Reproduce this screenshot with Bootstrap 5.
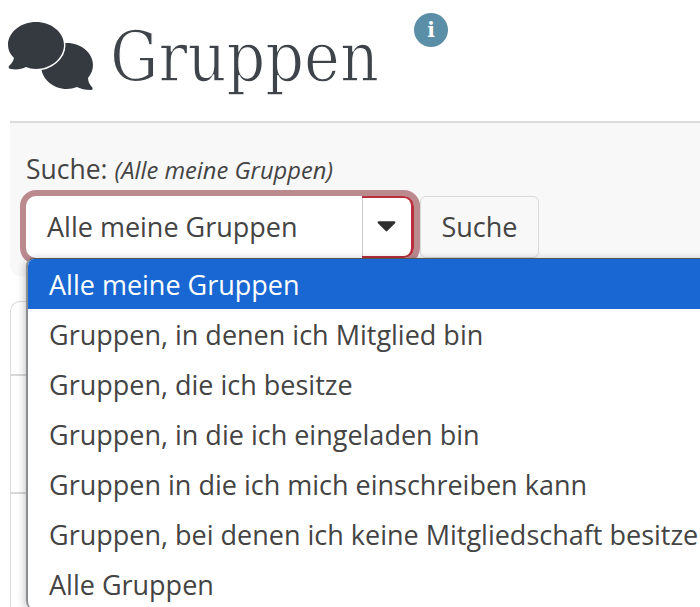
<!DOCTYPE html>
<html lang="de">
<head>
<meta charset="utf-8">
<title>Gruppen</title>
<link rel="stylesheet" href="https://cdn.jsdelivr.net/npm/bootstrap@5.3.0/dist/css/bootstrap.min.css">
<style>
html,body{height:607px;overflow:hidden;background:#fff;}
body{font-family:"Open Sans","Noto Sans",sans-serif;color:#3f4448;}
.stage{position:relative;width:700px;height:607px;overflow:hidden;padding-left:10px;}
.head-row{height:121px;margin-left:-2px;padding-top:17px;}
.chat-ico{width:88px;height:76px;flex:none;}
.page-title{font-family:"DejaVu Serif","Liberation Serif",serif;font-weight:400;font-size:70px;line-height:82px;color:#3e444a;margin:-1px 0 0 14px;transform:scaleX(.866);transform-origin:left;-webkit-text-stroke:1.4px #fff;}
.info-dot{position:absolute;left:414px;top:13px;width:34px;height:34px;border-radius:50%;background:#5b8fa8;color:#fff;font-family:"DejaVu Serif",serif;font-weight:700;font-size:20px;line-height:34px;text-align:center;}
.search-panel{height:155px;background:#f8f8f8;border-top:2px solid #dcdcdc;border-bottom-left-radius:10px;padding:31px 0 0 16px;}
.search-label{font-size:26.5px;line-height:30px;color:#444;}
.search-label em{font-size:23.7px;}
.controls{margin-top:11px;gap:6px;}
.combo{width:388px;height:62px;background:#fff;border-radius:10px;box-shadow:0 0 0 6px #bb8a8f;}
.combo-text{font-size:27px;padding:1px 0 0 21px;color:#444;}
.combo-arrow{width:52px;border:solid #b92f3d;border-width:2px 3px 2px 0;border-radius:0 10px 10px 0;box-shadow:inset 1px 0 0 #ccc;}
.caret-ico{width:19px;height:12px;margin-bottom:3px;}
.search-btn{width:119px;height:62px;font-size:27px;color:#444;background:#f8f8f8;border:1px solid #d9d9d9;border-radius:6px;padding:0;}
.table-box{height:400px;margin-top:25px;border:1px solid #dcdcdc;border-right:0;border-radius:10px 0 0 0;background:#fff;}
.table-line{height:74px;border-bottom:2px solid #d8d8d8;}
.table-line-b{height:118px;border-bottom:2px solid #d8d8d8;}
.option-menu{position:absolute;left:26px;top:258px;width:690px;margin:0;padding:0;display:block;background:#fff;border:0;border-left:2px solid #8b8f92;border-top:1px solid #555;border-radius:8px 0 0 8px;box-shadow:0 2px 10px rgba(0,0,0,.3);overflow:hidden;}
.option-menu .dropdown-item{height:50px;padding:0 0 0 21px;font-size:27px;line-height:52px;color:#444;white-space:nowrap;}
.option-menu .dropdown-item.active{background:#1967d2;color:#fff;}
</style>
</head>
<body>
<div class="stage">
  <div class="head-row d-flex align-items-start">
    <svg class="chat-ico" viewBox="0 0 88 76" aria-hidden="true">
      <path fill="#343a40" d="M59 26C73 26 85 36 85 48c0 5-2 9-5 13 0 4 2 7 4 9 1 1 1 3-1 3-6 0-10-1-14-3-3 1-7 2-10 2-14 0-26-10-26-24S45 26 59 26Z"/>
      <path fill="#343a40" stroke="#fff" stroke-width="3" paint-order="stroke" d="M28 5C43 5 56 15 56 28S43 52 28 52c-4 0-7-1-10-2-4 2-9 3-15 2-2 0-3-2-2-3 2-2 4-4 5-8C2 37 0 33 0 28 0 15 13 5 28 5Z"/>
    </svg>
    <h1 class="page-title">Gruppen</h1>
  </div>
  <span class="info-dot">i</span>
  <div class="search-panel">
    <div class="search-label">Suche: <em>(Alle meine Gruppen)</em></div>
    <div class="controls d-flex">
      <div class="combo d-flex">
        <div class="combo-text flex-grow-1 d-flex align-items-center">Alle meine Gruppen</div>
        <div class="combo-arrow d-flex align-items-center justify-content-center">
          <svg class="caret-ico" viewBox="0 0 20 12" aria-hidden="true"><path fill="#2f2f2f" d="M2 1h16c1 0 2 1 1 2l-8 8c-1 1-1 1-2 0L1 3C0 2 1 1 2 1Z"/></svg>
        </div>
      </div>
      <button type="button" class="btn search-btn">Suche</button>
    </div>
  </div>
  <div class="table-box">
    <div class="table-line"></div>
    <div class="table-line-b"></div>
  </div>
  <div class="dropdown-menu option-menu">
    <a class="dropdown-item active" href="#">Alle meine Gruppen</a>
    <a class="dropdown-item" href="#">Gruppen, in denen ich Mitglied bin</a>
    <a class="dropdown-item" href="#">Gruppen, die ich besitze</a>
    <a class="dropdown-item" href="#">Gruppen, in die ich eingeladen bin</a>
    <a class="dropdown-item" href="#">Gruppen in die ich mich einschreiben kann</a>
    <a class="dropdown-item" href="#">Gruppen, bei denen ich keine Mitgliedschaft besitze</a>
    <a class="dropdown-item" href="#">Alle Gruppen</a>
  </div>
</div>
<script src="https://cdn.jsdelivr.net/npm/bootstrap@5.3.0/dist/js/bootstrap.bundle.min.js"></script>
</body>
</html>
